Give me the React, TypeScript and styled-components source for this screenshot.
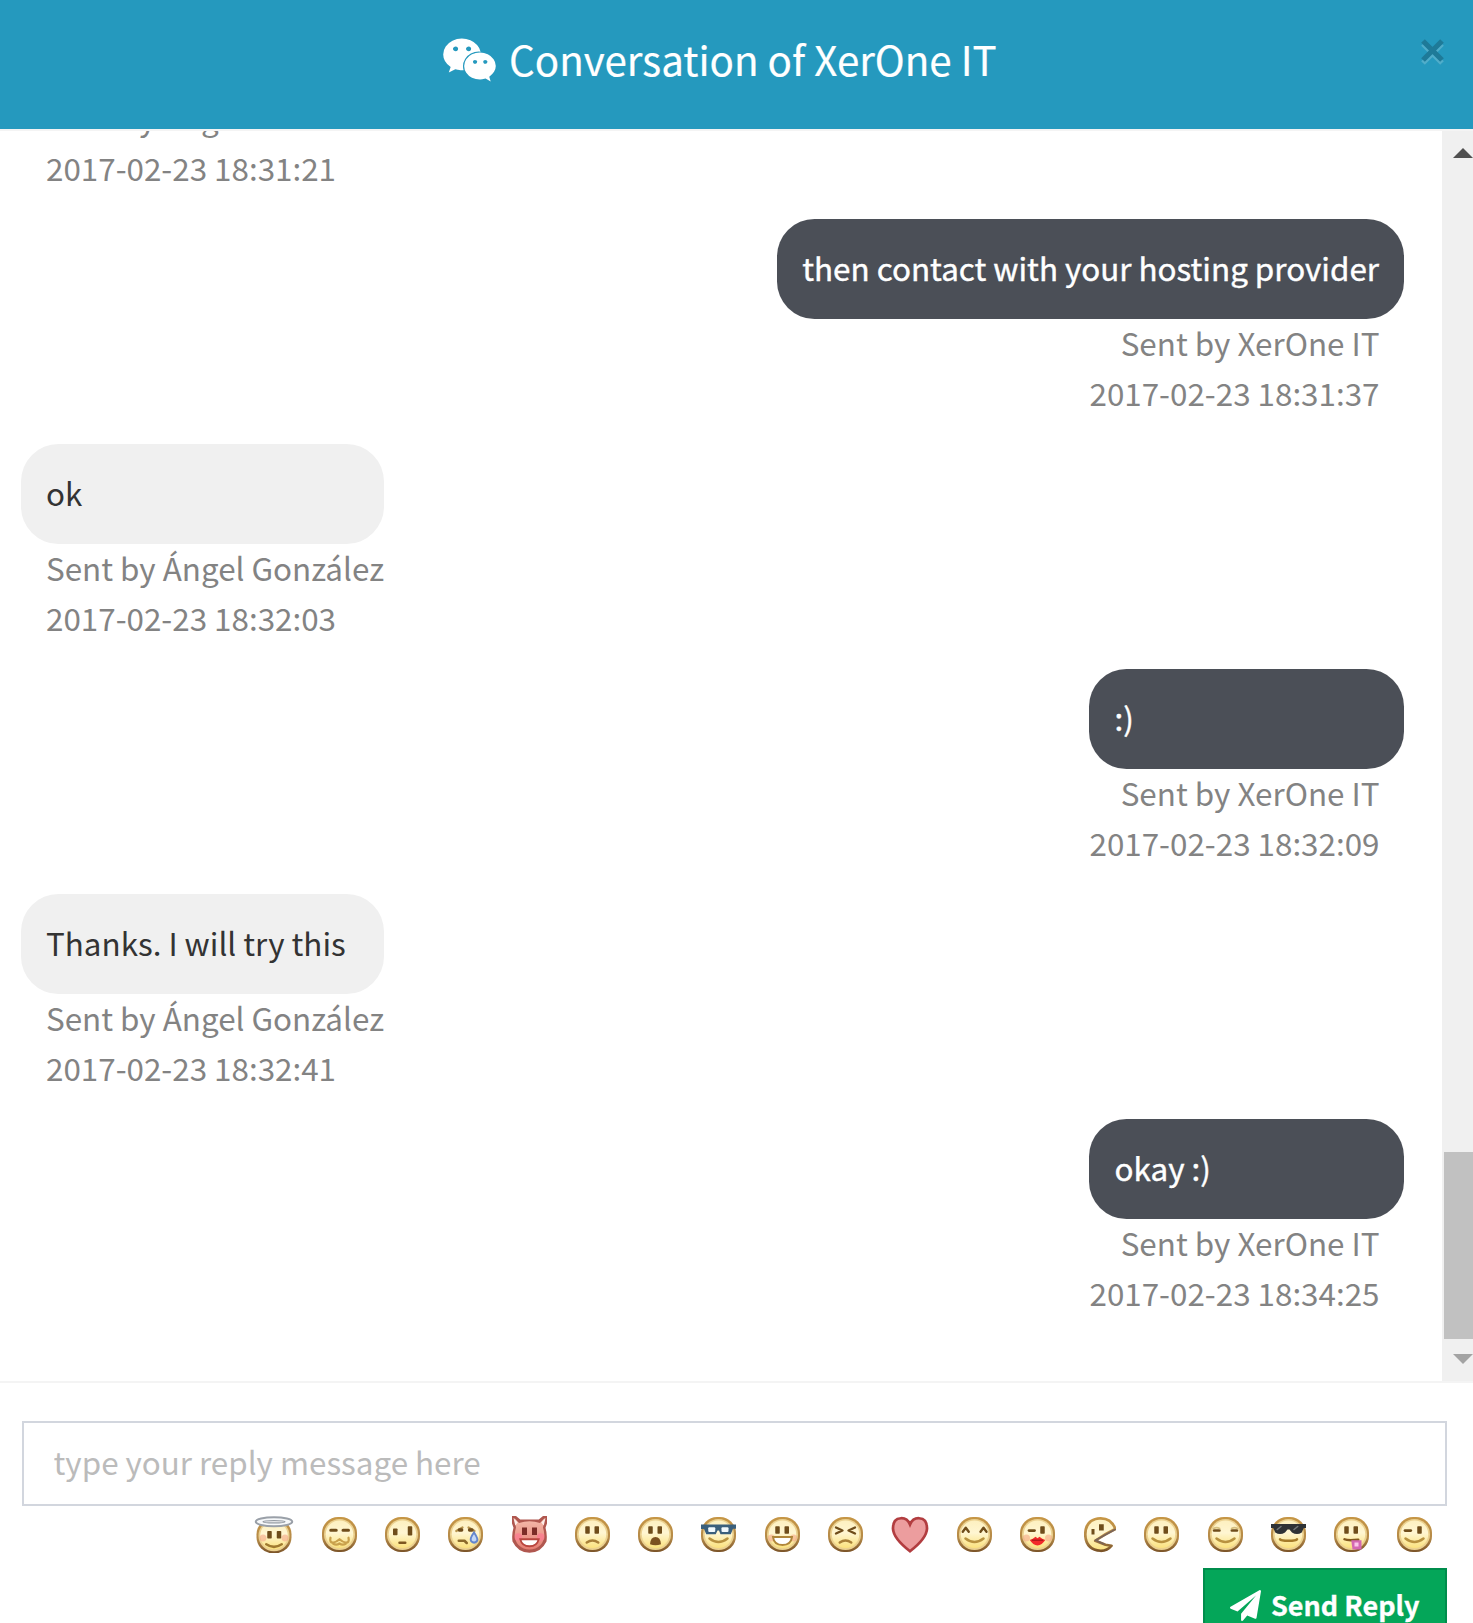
import React from 'react';
import styled, { createGlobalStyle } from 'styled-components';

const GlobalStyle = createGlobalStyle`
  * { box-sizing: border-box; }
  body {
    margin: 0;
    background: #fff;
    overflow: hidden;
    font-family: "Source Sans Pro", "Noto Sans CJK SC", "Noto Sans", sans-serif;
    font-size: 31.38px;
    line-height: 50px;
    color: #333;
  }
`;

const Modal = styled.div`
  display: flex;
  flex-direction: column;
  width: 1473px;
  height: 1623px;
  overflow: hidden;
  background: #fff;
`;

const Header = styled.header`
  display: flex;
  flex: none;
  align-items: flex-start;
  height: 129px;
  padding-left: 443px;
  background: #2599be;
  color: #fff;
`;

const ChatIcon = styled.svg`
  flex: none;
  width: 53px;
  height: 46px;
  margin-top: 37px;
  fill: #fff;
`;

const Title = styled.h1`
  margin: 29px 0 0 13px;
  font-size: 40.3px;
  font-weight: 400;
  line-height: 60px;
  white-space: nowrap;
  -webkit-text-stroke: 0.2px #fff;
`;

const CloseButton = styled.button`
  width: 23px;
  height: 26px;
  margin: 39px 29px 0 auto;
  padding: 0;
  border: 0;
  background: none;

  svg { display: block; }
`;

const Chat = styled.main`
  display: flex;
  flex: none;
  height: 1254px;
  border-top: 2px solid #f4f4f4;
  border-bottom: 2px solid #f4f4f4;
`;

const Messages = styled.div`
  display: flex;
  flex: 1;
  flex-direction: column;
  justify-content: flex-end;
  gap: 25px;
  padding: 0 38px 62px 21px;
  overflow: hidden;
`;

const Message = styled.article<{ $own?: boolean }>`
  display: flex;
  flex: none;
  flex-direction: column;
  align-self: ${p => (p.$own ? 'flex-end' : 'flex-start')};
  min-width: ${p => (p.$own ? 315 : 363)}px;
`;

const Bubble = styled.div<{ $own?: boolean }>`
  height: 100px;
  padding: ${p => (p.$own ? '24px 25px 26px 25.6px' : '24px 25px 26px')};
  border-radius: 37.5px;
  background: ${p => (p.$own ? '#4b4f57' : '#f0f0f0')};
  color: ${p => (p.$own ? '#fff' : '#333')};
  white-space: nowrap;
  -webkit-text-stroke: ${p => (p.$own ? '0.4px #fff' : '0')};
`;

const Meta = styled.div<{ $own?: boolean }>`
  height: 100px;
  padding: ${p => (p.$own ? '0 24.5px 0 0' : '0 0 0 25px')};
  margin-top: -1px;
  margin-bottom: 1px;
  color: #838383;
  text-align: ${p => (p.$own ? 'right' : 'left')};
  white-space: nowrap;
`;

const Scrollbar = styled.div`
  display: flex;
  flex-direction: column;
  width: 31px;
  padding: 17px 0 17px 2px;
  background: #f0f0f0;
`;

const Arrow = styled.svg`
  flex: none;
  width: 20px;
  height: 10px;
  margin-left: 9px;
`;

const Thumb = styled.div`
  height: 187px;
  margin: auto 0 15px;
  background: #c1c1c1;
`;

const Footer = styled.footer`
  display: flex;
  flex: 1;
  flex-direction: column;
  padding: 38px 26px 0 22px;
`;

const ReplyInput = styled.input`
  flex: none;
  width: 100%;
  height: 85px;
  padding: 0 30px 5px 29.5px;
  border: 2px solid #d2d6de;
  border-radius: 0;
  background: #fff;
  font: inherit;
  outline: none;

  &::placeholder { color: #bbb; opacity: 1; }
`;

const EmojiRow = styled.div`
  display: flex;
  flex: none;
  justify-content: flex-end;
  height: 37px;
  margin-top: 10px;
  padding-right: 15px;
`;

const EmojiCell = styled.svg<{ $w: number; $gap: number }>`
  flex: none;
  width: ${p => p.$w}px;
  height: 37px;
  margin-left: ${p => p.$gap}px;
  filter: blur(0.7px);
`;

const SendButton = styled.button`
  display: flex;
  flex: none;
  align-self: flex-end;
  align-items: flex-start;
  width: 244px;
  height: 85px;
  margin-top: 15px;
  padding: 20px 0 0 25px;
  border: 2px solid #008d4c;
  background: #04a659;
  color: #fff;
  font: inherit;
  font-size: 27px;
  font-weight: 700;
  line-height: 36px;
  white-space: nowrap;

  svg { flex: none; width: 31px; height: 31px; margin-right: 10px; fill: #fff; }
  span { margin-top: -3px; -webkit-text-stroke: 0.3px #fff; }
`;

const DARK = '#6f4d1b';

/* Eye bars and mouth curves are drawn on a 14-unit grid. */
const Eye = ({ x, y = 3.7, h = 3 }: { x: number; y?: number; h?: number }) => (
  <rect x={x - 0.9} y={y} width="1.8" height={h} rx="0.3" fill={DARK} />
);
const Line = ({ d, c = '#8c6a2a', w = 1 }: { d: string; c?: string; w?: number }) => (
  <path d={d} fill="none" stroke={c} strokeWidth={w} strokeLinecap="round" strokeLinejoin="round" />
);
const Eyes = () => <><Eye x={5} /><Eye x={8.7} /></>;
const Smile = () => <Line d="M3.4 8.6Q7 11.4 10.6 8.6" c="#b8923f" w={1} />;
const Blush = () => (
  <g fill="#f5a98c" opacity="0.6">
    <circle cx="2.6" cy="8.4" r="1.4" /><circle cx="11.4" cy="8.4" r="1.4" />
  </g>
);
const Frown = () => <Line d="M4.7 10.2Q7 8.6 9.3 10.2" c="#a88038" w={1} />;

type Emoji = { name: string; w?: number; gap?: number; kind?: 'devil' | 'heart' | 'pacman'; art?: React.ReactNode };

const emojis: Emoji[] = [
  { name: 'angel', w: 40, gap: 0, art: (
    <><Eye x={5.2} y={5.6} /><Eye x={9} y={5.6} /><Blush /><Line d="M3.9 10.9Q7 13 10.1 10.9" c="#a07a30" />
      <ellipse cx="7" cy="1.9" rx="7.3" ry="1.8" fill="#f6f8fa" stroke="#9aa0a8" strokeWidth="0.8" />
      <ellipse cx="7" cy="1.9" rx="4.4" ry="0.45" fill="#fff" stroke="#949aa2" strokeWidth="0.5" /></>
  ) },
  { name: 'confused', art: (
    <><Line d="M3.5 5.3H5.7M8.4 5.3H10.6" c={DARK} w={1.2} />
      <Line d="M3.4 8.3Q2.9 10.4 4.6 10.2Q5.8 10 7 8.9Q8.2 10 9.4 10.2Q11.1 10.4 10.6 8.3M4.5 10.7Q5.8 11.5 7 10.6Q8.2 11.5 9.5 10.7" c="#c9a14c" w={0.9} /></>
  ) },
  { name: 'unsure', art: <><Eye x={4.1} y={4.6} h={2.7} /><Eye x={10} y={3.7} h={3.7} /><Line d="M5.8 10.3H8.1" c="#7d571f" /></> },
  { name: 'cry', art: (
    <><Line d="M3.3 5.6L5.8 4.2M8.2 4.2L10.6 5.6" c="#b8964f" w={0.9} /><Line d="M4.5 5.2H5.5M8.6 5.2H9.6" c={DARK} w={1.3} />
      <Line d="M4.3 9.5H6.6L7.5 10.4" /><path d="M10.4 6.2Q12.2 8.8 11.6 9.6Q10.5 10.8 9.3 9.7Q8.5 8.8 10.4 6.2Z" fill="#c4d8f6" stroke="#6386cd" strokeWidth="0.8" /></>
  ) },
  { name: 'devil', gap: 29, kind: 'devil' },
  { name: 'frown', art: <><Eyes /><Frown /></> },
  { name: 'gasp', art: <><Eyes /><path d="M4.8 10.9Q5 8 7 8T9.2 10.9Q7 11.6 4.8 10.9Z" fill="#7b5020" /></> },
  { name: 'glasses', art: (
    <><Smile /><path d="M0 3H14V4.7H12.8L11.9 6.9H7.8L7.2 5.4H6.6L5.9 6.9H2.1L1.2 4.8H0Z" fill="#3a5f7c" />
      <rect x="2.9" y="4.1" width="2.8" height="1.9" rx=".4" fill="#f0f8fd" /><rect x="8.2" y="4.1" width="2.8" height="1.9" rx=".4" fill="#f0f8fd" /></>
  ) },
  { name: 'grin', gap: 29, art: <><Eyes /><Blush /><path d="M3.2 8H10.8Q10.4 11.2 7 11.2T3.2 8Z" fill="#fff" stroke="#b0863a" strokeWidth=".8" /></> },
  { name: 'upset', art: <><Line d="M3.2 4.2L5.8 5.4L3.2 6.6M10.8 4.2L8.2 5.4L10.8 6.6" c={DARK} w={0.95} /><Frown /></> },
  { name: 'heart', w: 38, kind: 'heart' },
  { name: 'kiki', art: <><Line d="M2.3 5.9L3.5 4.3L4.7 5.9M9.4 5.9L10.6 4.3L11.8 5.9" c={DARK} w={0.95} /><Smile /></> },
  { name: 'kiss', art: (
    <><Line d="M3.6 5.4H5.8" c={DARK} w={1.1} /><Eye x={9} /><Blush />
      <path d="M3.9 9.2Q5.2 8.8 6.2 7.9L7 8.5L7.8 7.9Q8.8 8.8 10.1 9.2Q8.8 11.2 7 11.4Q5.2 11.2 3.9 9.2Z" fill="#f22a2a" /><Line d="M5 9.3H9" c="#b3191c" w={0.6} /></>
  ) },
  { name: 'pacman', w: 32, gap: 29, kind: 'pacman' },
  { name: 'smile', art: <><Eyes /><Smile /></> },
  { name: 'squint', gap: 29, art: <><Line d="M2.4 5.4H4.6M9.5 5.4H11.6" c={DARK} /><Line d="M2.2 4.6Q3.4 3.9 4.7 4.6M9.4 4.6Q10.6 3.9 11.8 4.6" c="#d6bf7e" w={0.6} /><Smile /></> },
  { name: 'sunglasses', art: (
    <><Line d="M3.6 8.9Q4 9.5 7 9.5T10.4 8.9" c="#a57b29" />
      <path d="M0 2.8H14V4.4H13.1L12.3 6.2Q10.4 7.4 8.4 6.2L7.4 5H6.6L5.6 6.2Q3.6 7.4 1.7 6.2L.9 4.4H0Z" fill="#2f3235" /><Line d="M2.5 5L4 3.8M9.2 5L10.7 3.8" c="#74787a" w={0.6} /></>
  ) },
  { name: 'tongue', art: <><Eyes /><Line d="M4.2 8.9Q5.4 9.5 9.7 9.1" c="#83581d" /><path d="M6.9 9.3H11V13H7.4Z" fill="#d468b2" /><rect x="8.2" y="10.2" width="1.6" height="1.6" fill="#fac6e8" /></> },
  { name: 'wink', art: <><Line d="M3.2 5.4H5.5" c={DARK} w={1.1} /><Eye x={9} /><Smile /></> },
];

const Face = ({ angel }: { angel?: boolean }) => (
  <g transform={angel ? 'translate(0 .5)' : undefined}>
    <rect x="0" y="0" width="14" height="14" rx="6.4" fill="url(#rim)" />
    <circle cx="7" cy="7" r="6.2" fill="#ebd190" />
    <circle cx="7" cy="6.9" r="5.5" fill="url(#skin)" />
  </g>
);

const EmojiIcon = ({ e }: { e: Emoji }) => {
  const w = e.w ?? 35;
  const gridW = w / 2.5;
  const left = e.name === 'angel' ? -1 : 0;
  return (
    <EmojiCell $w={w} $gap={e.gap ?? 28} viewBox={`${left} -0.4 ${gridW} 14.8`} role="img" aria-label={e.name}>
      {e.kind === 'heart' && (
        <path d="M7.6 13.7Q1 8.6.8 4.7Q.7.6 4 .5Q6.5.4 7.6 3Q8.7.4 11.2.5Q14.5.6 14.4 4.7Q14.2 8.6 7.6 13.7Z" fill="#ec9d9e" stroke="#b23d40" strokeWidth="1.1" />
      )}
      {e.kind === 'devil' && (
        <>
          <path d="M0-.4H1.6L3.3 1H10.7L12.4-.4H14V2.6L13.4 4.3Q14.2 7 13.8 9.8Q11.6 14.3 7 14.3T.2 9.8Q-.2 7 .6 4.3L0 2.6Z" fill="#b0574f" />
          <path d="M.9.4L2.8 2.4Q7 .9 11.2 2.4L13.1.4L12.4 4.2Q13.8 8.7 11.4 11.2Q9.5 13 7 13T2.6 11.2Q.2 8.7 1.6 4.2Z" fill="url(#devil)" />
          <path d="M.6.4L2.3 2.2L1.3 3.4ZM13.4.4L11.7 2.2L12.7 3.4Z" fill="#fdeee9" />
          <g fill="#ff7893" opacity=".65"><circle cx="2.5" cy="8" r="1.5" /><circle cx="11.5" cy="8" r="1.5" /></g>
          <rect x="4" y="4.2" width="2" height="3" fill="#7c2c27" /><rect x="8" y="4.2" width="2" height="3" fill="#7c2c27" />
          <path d="M3.3 8.9H10.7Q10 11.7 7 11.7T3.3 8.9Z" fill="#fff" stroke="#b8453e" strokeWidth=".7" />
        </>
      )}
      {e.kind === 'pacman' && (
        <>
          <path d="M12.5 4.8Q11 .5 6.7.5Q.6.8.5 7Q.7 13.1 6.7 13.5Q9.4 13.5 11 11.5L8.6 11.1L4.5 9.5Q8 7 12.5 4.8Z" fill="url(#skin)" stroke="url(#rim)" strokeWidth="1.1" strokeLinejoin="round" />
          <Line d="M12.4 5L4.6 9.3L7.8 10.7" c="#7a6458" w={0.75} />
          <rect x="6" y="2.9" width="1.9" height="2.5" fill={DARK} /><rect x="3" y="4.8" width="1.2" height="2.2" fill={DARK} />
        </>
      )}
      {!e.kind && <><Face angel={e.name === 'angel'} />{e.art}</>}
    </EmojiCell>
  );
};

const GradientDefs = styled.svg`
  position: absolute;
  width: 0;
  height: 0;
`;

type Entry = { own: boolean; text?: string; by: string; at: string };

/* The oldest entry is scrolled up so that only its caption is still in view. */
const thread: Entry[] = [
  { own: false, by: 'Ángel González', at: '2017-02-23 18:31:21' },
  { own: true, text: 'then contact with your hosting provider', by: 'XerOne IT', at: '2017-02-23 18:31:37' },
  { own: false, text: 'ok', by: 'Ángel González', at: '2017-02-23 18:32:03' },
  { own: true, text: ':)', by: 'XerOne IT', at: '2017-02-23 18:32:09' },
  { own: false, text: 'Thanks. I will try this', by: 'Ángel González', at: '2017-02-23 18:32:41' },
  { own: true, text: 'okay :)', by: 'XerOne IT', at: '2017-02-23 18:34:25' },
];

export default function App() {
  return (
    <>
      <GlobalStyle />
      <GradientDefs aria-hidden="true">
        <defs>
          <linearGradient id="rim" x1="0" y1="0" x2="0" y2="1"><stop offset="0" stopColor="#c69645" /><stop offset=".6" stopColor="#b58a48" /><stop offset="1" stopColor="#7b5428" /></linearGradient>
          <linearGradient id="skin" x1="0" y1="0" x2="0" y2="1"><stop offset="0" stopColor="#fdf0c0" /><stop offset=".45" stopColor="#fff6d2" /><stop offset="1" stopColor="#fbe27d" /></linearGradient>
          <linearGradient id="devil" x1="0" y1="0" x2="0" y2="1"><stop offset="0" stopColor="#f5bcac" /><stop offset="1" stopColor="#e57d72" /></linearGradient>
        </defs>
      </GradientDefs>
      <Modal>
        <Header>
          <ChatIcon viewBox="0 0 2048 1792" aria-hidden="true">
            <path d="M580 461q0-41-25-66t-66-25q-43 0-76 25.5t-33 65.5q0 39 33 64.5t76 25.5q41 0 66-24.5t25-65.5zm743 507q0-28-25.5-50t-65.5-22q-27 0-49.5 22.5t-22.5 49.5q0 28 22.5 50.5t49.5 22.5q40 0 65.5-22t25.5-51zm-236-507q0-41-24.5-66t-65.5-25q-43 0-76 25.5t-33 65.5q0 39 33 64.5t76 25.5q41 0 65.5-24.5t24.5-65.5zm635 507q0-28-26-50t-65-22q-27 0-49.5 22.5t-22.5 49.5q0 28 22.5 50.5t49.5 22.5q39 0 65-22t26-51zm-266-397q-31-4-70-4-169 0-311 77t-223.5 208.5-81.5 287.5q0 78 23 152-35 3-68 3-26 0-50-1.5t-55-6.5-44.5-7-54.5-10.5-50-10.5l-253 127 72-218q-290-203-290-490 0-169 97.5-311t264-223.5 363.5-81.5q176 0 332.5 66t262 182.5 136.5 260.5zm592 561q0 117-68.5 223.5t-185.5 193.5l55 181-199-109q-150 37-218 37-169 0-311-70.5t-223.5-191.5-81.5-264 81.5-264 223.5-191.5 311-70.5q161 0 303 70.5t227.5 192 85.5 263.5z" />
          </ChatIcon>
          <Title>Conversation of XerOne IT</Title>
          <CloseButton aria-label="Close">
            <svg width="23" height="26" viewBox="0 0 23 26" fill="none" strokeWidth="5.2">
              <path d="M2 5L21 24M21 5L2 24" stroke="#50adca" />
              <path d="M2 2L21 21M21 2L2 21" stroke="#1e7a98" />
            </svg>
          </CloseButton>
        </Header>
        <Chat>
          <Messages>
            {thread.map(m => (
              <Message key={m.at} $own={m.own}>
                {m.text && <Bubble $own={m.own}>{m.text}</Bubble>}
                <Meta $own={m.own}>
                  Sent by {m.by}
                  <br />
                  {m.at}
                </Meta>
              </Message>
            ))}
          </Messages>
          <Scrollbar>
            <Arrow viewBox="0 0 20 10"><path d="M0 10L10 0L20 10Z" fill="#505050" /></Arrow>
            <Thumb />
            <Arrow viewBox="0 0 20 10"><path d="M0 0L10 10L20 0Z" fill="#a3a3a3" /></Arrow>
          </Scrollbar>
        </Chat>
        <Footer>
          <ReplyInput placeholder="type your reply message here" />
          <EmojiRow>
            {emojis.map(e => <EmojiIcon key={e.name} e={e} />)}
          </EmojiRow>
          <SendButton>
            <svg viewBox="0 0 1792 1792" aria-hidden="true">
              <path d="M1764 11q33 24 27 64l-256 1536q-5 29-32 45-14 8-31 8-11 0-24-5l-453-185-242 295q-18 23-49 23-13 0-22-4-19-7-30.5-23.5t-11.5-36.5v-349l864-1059-1069 925-395-162q-37-14-40-55-2-40 32-59l1664-960q15-9 32-9 20 0 36 11z" />
            </svg>
            <span>Send Reply</span>
          </SendButton>
        </Footer>
      </Modal>
    </>
  );
}
